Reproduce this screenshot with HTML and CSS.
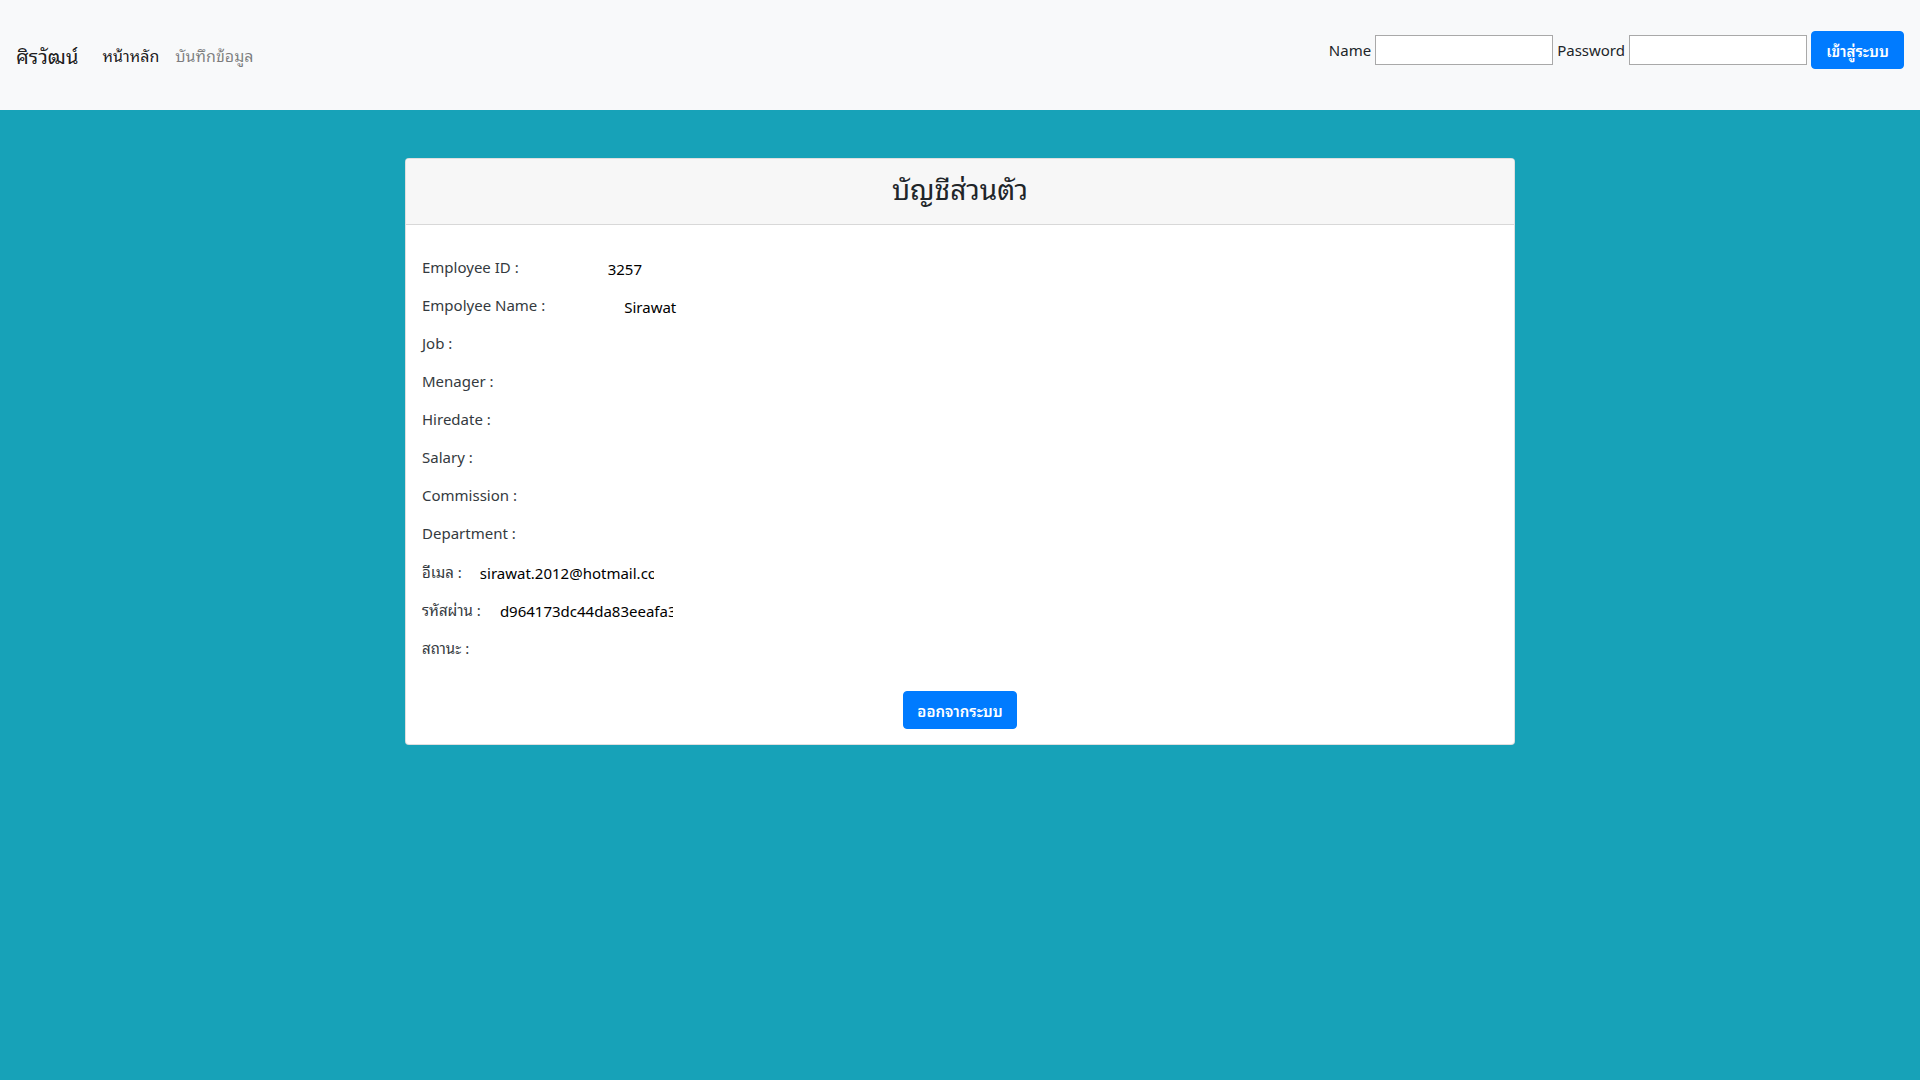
FILE: index.html
```html
<!DOCTYPE html>
<html lang="th">
<head>
<meta charset="utf-8">
<title>บัญชีส่วนตัว</title>
<link rel="stylesheet" href="styles.css">
</head>
<body>
<nav class="navbar">
  <div class="nav-left">
    <a class="brand" href="#">ศิรวัฒน์</a>
    <a class="nav-link active" href="#">หน้าหลัก</a>
    <a class="nav-link" href="#">บันทึกข้อมูล</a>
  </div>
  <form class="login">
    <label class="login-label">Name</label>
    <input class="login-input" type="text">
    <label class="login-label">Password</label>
    <input class="login-input" type="password">
    <button class="btn btn-login" type="button">เข้าสู่ระบบ</button>
  </form>
</nav>
<main class="page">
  <section class="card">
    <header class="card-header">
      <h3 class="card-title">บัญชีส่วนตัว</h3>
    </header>
    <div class="card-body">
      <div class="row"><span class="label">Employee ID :</span><span class="value v-id">3257</span></div>
      <div class="row"><span class="label">Empolyee Name :</span><span class="value v-name">Sirawat</span></div>
      <div class="row"><span class="label">Job :</span></div>
      <div class="row"><span class="label">Menager :</span></div>
      <div class="row"><span class="label">Hiredate :</span></div>
      <div class="row"><span class="label">Salary :</span></div>
      <div class="row"><span class="label">Commission :</span></div>
      <div class="row"><span class="label">Department :</span></div>
      <div class="row"><span class="label th">อีเมล :</span><input class="field v-mail" type="text" readonly value="sirawat.2012@hotmail.com"></div>
      <div class="row"><span class="label th">รหัสผ่าน :</span><input class="field v-pass" type="text" readonly value="d964173dc44da83eeafa35ebbc1d35"></div>
      <div class="row"><span class="label th">สถานะ :</span></div>
      <div class="actions">
        <button class="btn btn-logout" type="button">ออกจากระบบ</button>
      </div>
    </div>
  </section>
</main>
</body>
</html>
```

FILE: styles.css
```css
* { box-sizing: border-box; }

html, body {
  margin: 0;
  padding: 0;
}

body {
  min-height: 100vh;
  background: #17a2b8;
  color: #212529;
  font-family: "Segoe UI", "Noto Sans", "Leelawadee UI", "Noto Sans Thai Looped", "Noto Serif Thai", "Loma", "Garuda", "Waree", "Norasi", "Noto Sans Thai", Tahoma, sans-serif;
  font-size: 16px;
}

.navbar {
  height: 110px;
  background: #f8f9fa;
  display: flex;
  align-items: center;
  justify-content: space-between;
  padding: 0 16px;
}

.nav-left {
  display: flex;
  align-items: center;
}

.brand {
  font-size: 20px;
  color: rgba(0, 0, 0, 0.9);
  text-decoration: none;
  margin-right: 16px;
}

.nav-link {
  padding: 0 8px;
  color: rgba(0, 0, 0, 0.5);
  text-decoration: none;
  font-size: 16px;
}

.nav-link.active {
  color: rgba(0, 0, 0, 0.9);
}

.login {
  display: flex;
  align-items: center;
  gap: 4px;
  margin: 0 0 10px 0;
}

.login-label {
  font-size: 15px;
  color: #212529;
}

.login-input {
  width: 178px;
  height: 30px;
  border: 1px solid #a9a9a9;
  background: #fff;
  padding: 1px 2px;
  margin: 0;
}

.btn {
  font-family: inherit;
  font-size: 15px;
  font-weight: 600;
  color: #fff;
  background: #007bff;
  border: 1px solid #007bff;
  border-radius: 4px;
  height: 38px;
  padding: 0 6px;
  white-space: nowrap;
  cursor: pointer;
}

.btn-login {
  min-width: 93px;
}

.page {
  width: 1110px;
  margin: 48px auto 0;
}

.card {
  background: #fff;
  border: 1px solid rgba(0, 0, 0, 0.125);
  border-radius: 4px;
  overflow: hidden;
}

.card-header {
  height: 66px;
  padding-bottom: 8px;
  background: #f7f7f7;
  border-bottom: 1px solid rgba(0, 0, 0, 0.125);
  display: flex;
  align-items: center;
  justify-content: center;
}

.card-title {
  margin: 0;
  font-size: 28px;
  font-weight: 400;
  color: #212529;
}

.card-body {
  padding: 23px 16px 15px;
}

.row {
  height: 38px;
  display: flex;
  align-items: center;
  font-size: 15px;
  color: #343a40;
}

.value {
  color: #000;
  font-size: 15px;
  position: relative;
  top: 2px;
  white-space: nowrap;
}

.field {
  font-family: inherit;
  font-size: 15px;
  color: #000;
  border: none;
  background: transparent;
  padding: 0;
  margin: 0;
  outline: none;
  position: relative;
  top: 2px;
}

.v-id { margin-left: 89px; }
.v-name { margin-left: 79px; }
.v-mail { margin-left: 18px; width: 174px; }
.v-pass { margin-left: 19px; width: 173px; }

.actions {
  display: flex;
  justify-content: center;
  margin-top: 25px;
}

.btn-logout {
  min-width: 114px;
}
```
